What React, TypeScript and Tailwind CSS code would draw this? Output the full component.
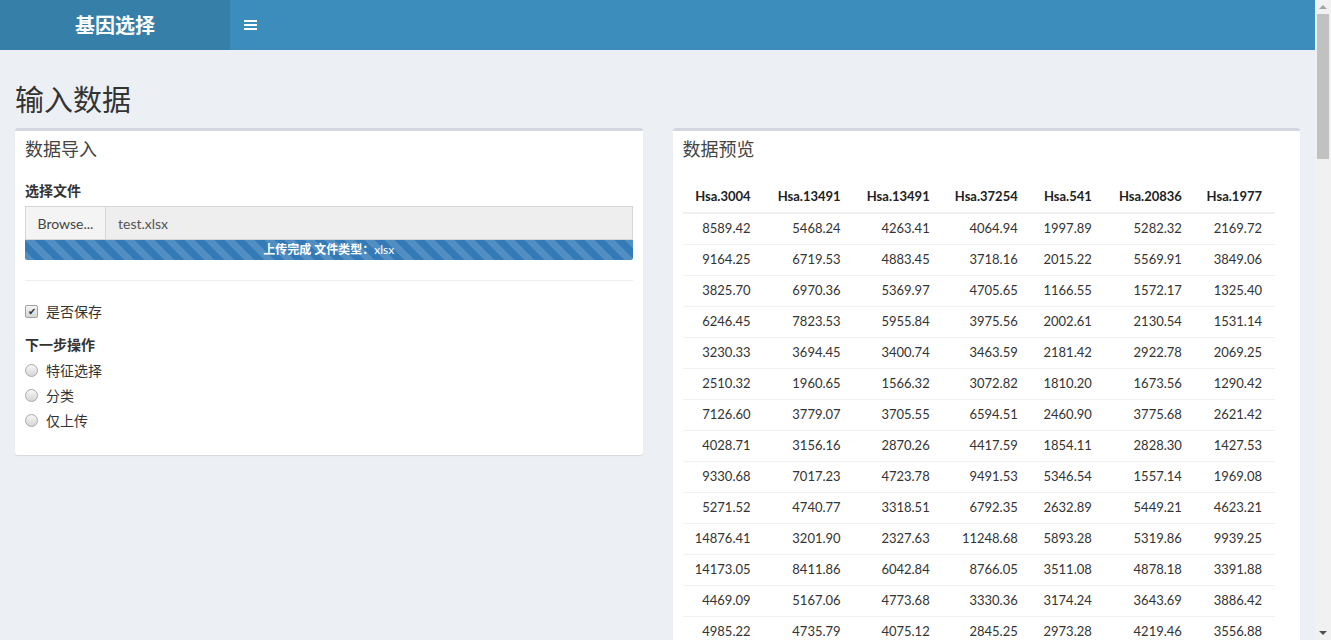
import React from 'react';

const font = { fontFamily: '"Lato", "Noto Sans CJK SC", sans-serif' };

const headers = ['Hsa.3004', 'Hsa.13491', 'Hsa.13491', 'Hsa.37254', 'Hsa.541', 'Hsa.20836', 'Hsa.1977'];
const colWidths = ['w-[81px]', 'w-[90px]', 'w-[89px]', 'w-[88px]', 'w-[74px]', 'w-[90px]', 'w-[80px]'];

const rows = [
  ['8589.42', '5468.24', '4263.41', '4064.94', '1997.89', '5282.32', '2169.72'],
  ['9164.25', '6719.53', '4883.45', '3718.16', '2015.22', '5569.91', '3849.06'],
  ['3825.70', '6970.36', '5369.97', '4705.65', '1166.55', '1572.17', '1325.40'],
  ['6246.45', '7823.53', '5955.84', '3975.56', '2002.61', '2130.54', '1531.14'],
  ['3230.33', '3694.45', '3400.74', '3463.59', '2181.42', '2922.78', '2069.25'],
  ['2510.32', '1960.65', '1566.32', '3072.82', '1810.20', '1673.56', '1290.42'],
  ['7126.60', '3779.07', '3705.55', '6594.51', '2460.90', '3775.68', '2621.42'],
  ['4028.71', '3156.16', '2870.26', '4417.59', '1854.11', '2828.30', '1427.53'],
  ['9330.68', '7017.23', '4723.78', '9491.53', '5346.54', '1557.14', '1969.08'],
  ['5271.52', '4740.77', '3318.51', '6792.35', '2632.89', '5449.21', '4623.21'],
  ['14876.41', '3201.90', '2327.63', '11248.68', '5893.28', '5319.86', '9939.25'],
  ['14173.05', '8411.86', '6042.84', '8766.05', '3511.08', '4878.18', '3391.88'],
  ['4469.09', '5167.06', '4773.68', '3330.36', '3174.24', '3643.69', '3886.42'],
  ['4985.22', '4735.79', '4075.12', '2845.25', '2973.28', '4219.46', '3556.88'],
];

const Radio = ({ label }: { label: string }) => (
  <div className="flex h-[20px] items-center">
    <span className="inline-block h-[13px] w-[13px] rounded-full border border-[#a9a9a9] bg-[linear-gradient(#f6f6f6,#d6d6d6)]" />
    <span className="ml-[8px] text-[14px] text-[#333]">{label}</span>
  </div>
);

// the browser scrollbar from the screenshot
const Scrollbar = () => (
  <div className="fixed top-0 right-0 flex h-screen w-[16px] flex-col items-center bg-[#f1f1f1]">
    <div className="flex h-[14px] items-center justify-center">
      <span className="h-0 w-0 border-x-[4px] border-b-[4px] border-x-transparent border-b-[#a3a3a3]" />
    </div>
    <div className="h-[145px] w-[12px] bg-[#c1c1c1]" />
    <div className="flex-1" />
    <div className="flex h-[14px] items-center justify-center">
      <span className="h-0 w-0 border-x-[4px] border-t-[4px] border-x-transparent border-t-[#505050]" />
    </div>
  </div>
);

export default function App() {
  return (
    <div className="min-h-screen bg-[#ecf0f5] text-[#333]" style={font}>
      <div className="mr-[16px]">
        <header className="flex h-[50px] bg-[#3c8dbc]">
          <div className="flex w-[230px] items-center justify-center bg-[#367fa9] text-[20px] font-bold text-white">
            基因选择
          </div>
          <div className="flex items-center px-[14px]">
            <div className="flex h-[10px] w-[13px] flex-col justify-between">
              <span className="h-[2px] bg-white" />
              <span className="h-[2px] bg-white" />
              <span className="h-[2px] bg-white" />
            </div>
          </div>
        </header>

        <div className="px-[15px]">
          <h1 className="pt-[32px] pb-[10px] text-[29px] leading-[36px] text-[#333]">输入数据</h1>

          <div className="grid grid-cols-2 items-start gap-[30px]">
            <div className="rounded-[3px] border-t-[3px] border-[#d2d6de] bg-white shadow-[0_1px_1px_rgba(0,0,0,0.1)]">
              <div className="px-[10px] pt-[8px] pb-[12px]">
                <h3 className="text-[18px] leading-[20px] text-[#444]">数据导入</h3>
              </div>
              <div className="px-[10px] pt-[10px] pb-[25px]">
                <div className="mb-[5px] text-[14px] font-bold leading-[20px]">选择文件</div>
                <div className="flex h-[34px] border border-[#d6d6d6]">
                  <div className="flex w-[80px] items-center justify-center border-r border-[#d6d6d6] bg-[#f4f4f4] text-[14px] text-[#444]">
                    Browse...
                  </div>
                  <div className="flex flex-1 items-center bg-[#eeeeee] px-[12px] text-[14px] text-[#555]">
                    test.xlsx
                  </div>
                </div>
                <div className="flex h-[20px] items-center justify-center rounded-b-[2px] bg-[#337ab7] bg-[linear-gradient(45deg,rgba(255,255,255,0.15)_25%,transparent_25%,transparent_50%,rgba(255,255,255,0.15)_50%,rgba(255,255,255,0.15)_75%,transparent_75%,transparent)] bg-size-[20px_20px] text-[12px] font-bold text-white">
                  上传完成 文件类型：<span className="font-normal">xlsx</span>
                </div>
                <hr className="mt-[20px] mb-[20px] border-t border-[#eeeeee]" />
                <div className="flex h-[20px] items-center">
                  <span className="flex h-[13px] w-[13px] items-center justify-center rounded-[2px] border border-[#a0a0a0] bg-[linear-gradient(#f6f6f6,#d6d6d6)] text-[10px] leading-none text-[#333]">
                    ✔
                  </span>
                  <span className="ml-[8px] text-[14px]">是否保存</span>
                </div>
                <div className="mt-[14px] mb-[5px] text-[14px] font-bold leading-[20px]">下一步操作</div>
                <div className="flex flex-col gap-[5px]">
                  <Radio label="特征选择" />
                  <Radio label="分类" />
                  <Radio label="仅上传" />
                </div>
              </div>
            </div>

            <div className="rounded-[3px] border-t-[3px] border-[#d2d6de] bg-white shadow-[0_1px_1px_rgba(0,0,0,0.1)]">
              <div className="px-[10px] pt-[8px] pb-[12px]">
                <h3 className="text-[18px] leading-[20px] text-[#444]">数据预览</h3>
              </div>
              <div className="pt-[10px] pr-[25px] pb-[10px] pl-[10px]">
                <table className="w-full table-fixed border-collapse text-[13px]">
                  <thead>
                    <tr className="h-[32px] border-b-2 border-[#f0f0f0]">
                      {headers.map((h, i) => (
                        <th key={i} className={`${colWidths[i]} pr-[13px] text-right font-bold text-[#222]`}>
                          {h}
                        </th>
                      ))}
                    </tr>
                  </thead>
                  <tbody>
                    {rows.map((r, ri) => (
                      <tr key={ri} className="h-[31px] border-b border-[#f2f2f2]">
                        {r.map((v, ci) => (
                          <td key={ci} className="pr-[13px] text-right text-[#333]">
                            {v}
                          </td>
                        ))}
                      </tr>
                    ))}
                  </tbody>
                </table>
              </div>
            </div>
          </div>
        </div>
      </div>
      <Scrollbar />
    </div>
  );
}
